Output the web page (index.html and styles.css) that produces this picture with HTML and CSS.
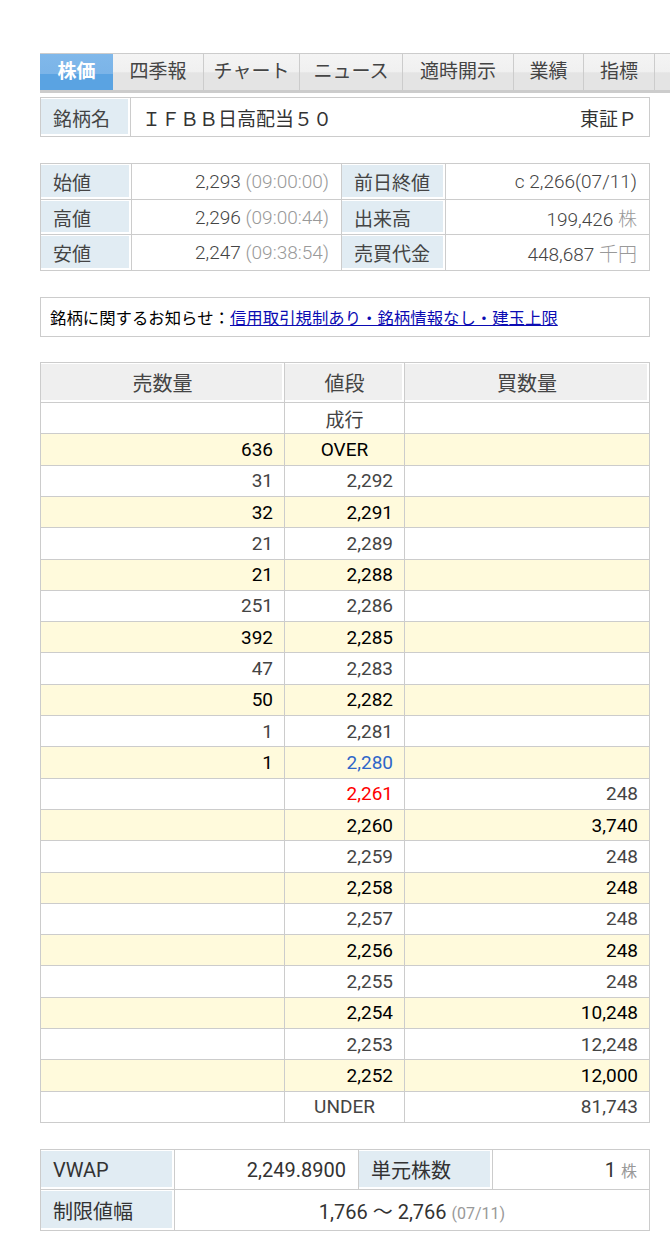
FILE: index.html
```html
<!DOCTYPE html>
<html lang="ja">
<head>
  <meta charset="UTF-8">
  <meta name="viewport" content="width=device-width, initial-scale=1.0">
  <title>株価 | IFBB日高配当50</title>
  <link rel="stylesheet" href="styles.css">
</head>
<body>
  <div class="page">
    <ul class="tabs">
      <li class="tab active" style="width:73px">株価</li>
      <li class="tab" style="width:91px">四季報</li>
      <li class="tab" style="width:96px">チャート</li>
      <li class="tab" style="width:103px">ニュース</li>
      <li class="tab" style="width:111px">適時開示</li>
      <li class="tab" style="width:70px">業績</li>
      <li class="tab" style="width:71px">指標</li>
      <li class="tab" style="width:15px"></li>
    </ul>

    <table class="name-table">
      <tr>
        <th class="label">銘柄名</th>
        <td class="name">ＩＦＢＢ日高配当５０</td>
        <td class="market">東証Ｐ</td>
      </tr>
    </table>

    <table class="info-table">
      <tr>
        <th class="label">始値</th>
        <td class="val">2,293 <span class="sub">(09:00:00)</span></td>
        <th class="label">前日終値</th>
        <td class="val">c 2,266<span class="sub-dark">(07/11)</span></td>
      </tr>
      <tr>
        <th class="label">高値</th>
        <td class="val">2,296 <span class="sub">(09:00:44)</span></td>
        <th class="label">出来高</th>
        <td class="val">199,426 <span class="unit">株</span></td>
      </tr>
      <tr>
        <th class="label">安値</th>
        <td class="val">2,247 <span class="sub">(09:38:54)</span></td>
        <th class="label">売買代金</th>
        <td class="val">448,687 <span class="unit">千円</span></td>
      </tr>
    </table>

    <div class="notice">
      銘柄に関するお知らせ：<a href="#">信用取引規制あり・銘柄情報なし・建玉上限</a>
    </div>

    <table class="board">
      <thead>
        <tr>
          <th class="col-sell">売数量</th>
          <th class="col-price">値段</th>
          <th class="col-buy">買数量</th>
        </tr>
      </thead>
      <tbody>
        <tr><td></td><td class="center">成行</td><td></td></tr>
        <tr class="hl"><td>636</td><td class="center">OVER</td><td></td></tr>
        <tr><td>31</td><td>2,292</td><td></td></tr>
        <tr class="hl"><td>32</td><td>2,291</td><td></td></tr>
        <tr><td>21</td><td>2,289</td><td></td></tr>
        <tr class="hl"><td>21</td><td>2,288</td><td></td></tr>
        <tr><td>251</td><td>2,286</td><td></td></tr>
        <tr class="hl"><td>392</td><td>2,285</td><td></td></tr>
        <tr><td>47</td><td>2,283</td><td></td></tr>
        <tr class="hl"><td>50</td><td>2,282</td><td></td></tr>
        <tr><td>1</td><td>2,281</td><td></td></tr>
        <tr class="hl"><td>1</td><td class="ask">2,280</td><td></td></tr>
        <tr><td></td><td class="bid">2,261</td><td>248</td></tr>
        <tr class="hl"><td></td><td>2,260</td><td>3,740</td></tr>
        <tr><td></td><td>2,259</td><td>248</td></tr>
        <tr class="hl"><td></td><td>2,258</td><td>248</td></tr>
        <tr><td></td><td>2,257</td><td>248</td></tr>
        <tr class="hl"><td></td><td>2,256</td><td>248</td></tr>
        <tr><td></td><td>2,255</td><td>248</td></tr>
        <tr class="hl"><td></td><td>2,254</td><td>10,248</td></tr>
        <tr><td></td><td>2,253</td><td>12,248</td></tr>
        <tr class="hl"><td></td><td>2,252</td><td>12,000</td></tr>
        <tr><td></td><td class="center">UNDER</td><td>81,743</td></tr>
      </tbody>
    </table>

    <table class="extra-table">
      <tr>
        <th class="label">VWAP</th>
        <td class="val">2,249.8900</td>
        <th class="label">単元株数</th>
        <td class="val">1 <span class="unit small">株</span></td>
      </tr>
      <tr>
        <th class="label">制限値幅</th>
        <td class="range" colspan="3">1,766 ～ 2,766 <span class="sub small">(07/11)</span></td>
      </tr>
    </table>
  </div>
</body>
</html>
```

FILE: styles.css
```css
body {
  margin: 0;
  padding: 0;
  background: #fff;
  color: #333;
  font-family: Roboto, "Noto Sans CJK JP", sans-serif;
  overflow: hidden;
}

.page {
  width: 610px;
  padding: 53px 0 0 40px;
}

table {
  border-collapse: collapse;
  width: 610px;
}

th,
td {
  border: 1px solid #ccc;
  padding: 0;
}

.label {
  background: #e1ecf3;
  box-shadow: inset -2px -2px 0 #fff, inset 0 1px 0 #fff;
  font-weight: normal;
  text-align: left;
  color: #444;
}

/* tabs */
.tabs {
  display: flex;
  list-style: none;
  margin: 0;
  padding: 0;
  width: 630px;
  overflow: hidden;
  border-top: 1px solid #ccc;
  border-bottom: 3px solid #ccc;
  background: linear-gradient(#f4f4f4, #f0f0f0 50%, #e4e4e4 52%, #e4e4e4);
}

.tab {
  flex: none;
  box-sizing: border-box;
  height: 36px;
  line-height: 36px;
  text-align: center;
  font-size: 19px;
  color: #444;
  border-right: 1px solid #ccc;
}

.tab:last-child {
  border-right: none;
}

.tab.active {
  position: relative;
  color: #fff;
  font-weight: bold;
  border-right: none;
  background: linear-gradient(#80b8ea, #7bb4e8 50%, #5aa3e2 52%, #5aa3e2);
  box-shadow: inset 0 -3px 0 #1c6bb5;
  height: 39px;
  line-height: 36px;
  margin-bottom: -3px;
}

/* name */
.name-table {
  margin-top: 4px;
}

.name-table td,
.name-table th {
  height: 38px;
  font-size: 19px;
}

.name-table .label {
  width: 90px;
  padding-left: 12px;
  box-sizing: border-box;
}

.name {
  padding-left: 11px;
  color: #333;
  border-right: none;
}

.market {
  text-align: right;
  padding-right: 12px;
  border-left: none;
  color: #333;
}

/* info */
.info-table {
  margin-top: 26px;
}

.info-table th,
.info-table td {
  height: 34.7px;
  font-size: 19px;
}

.info-table .label {
  padding-left: 12px;
}

.info-table th:first-child {
  width: 78px;
}

.info-table th:nth-child(3) {
  width: 91px;
}

.info-table td:nth-child(2) {
  width: 197px;
}

.val {
  text-align: right;
  padding-right: 12px;
  color: #444;
  font-size: 18px;
  font-weight: 300;
}

.sub {
  color: #999;
}

.sub-dark {
  color: #444;
}

.unit {
  color: #999;
}

/* notice */
.notice {
  margin-top: 26px;
  border: 1px solid #ccc;
  height: 38px;
  line-height: 38px;
  padding-left: 9px;
  font-size: 16.4px;
  color: #000;
  font-family: "Noto Sans CJK JP", sans-serif;
}

.notice a {
  color: #0b0bb3;
}

/* board */
.board {
  margin-top: 25px;
}

.board th {
  height: 39px;
  background: #efefef;
  box-shadow: inset -2px -2px 0 #fff, inset 0 1px 0 #fff;
  font-size: 20px;
  font-weight: normal;
  color: #444;
}

.board .col-sell {
  width: 243px;
}

.board .col-price {
  width: 119px;
}

.board td {
  height: 30.3px;
  text-align: right;
  padding-right: 11px;
  font-size: 19px;
  color: #444;
}

.board td.center {
  text-align: center;
  padding-right: 0;
}

.board tr.hl td {
  background: #fffadc;
  color: #000;
}

.board tr td.ask {
  color: #2f66c9;
}

.board tr td.bid {
  color: #f00;
}

/* extra */
.extra-table {
  margin-top: 26px;
}

.extra-table th,
.extra-table td {
  height: 39.5px;
  font-size: 20px;
}

.extra-table .label {
  padding-left: 12px;
  color: #333;
}

.extra-table th:first-child {
  width: 121px;
}

.extra-table td:nth-child(2) {
  width: 171px;
}

.extra-table th:nth-child(3) {
  width: 121px;
}

.extra-table .val {
  font-size: 20px;
  font-weight: normal;
  color: #333;
}

.range {
  text-align: center;
  color: #333;
}

.small {
  font-size: 16px;
}
```
